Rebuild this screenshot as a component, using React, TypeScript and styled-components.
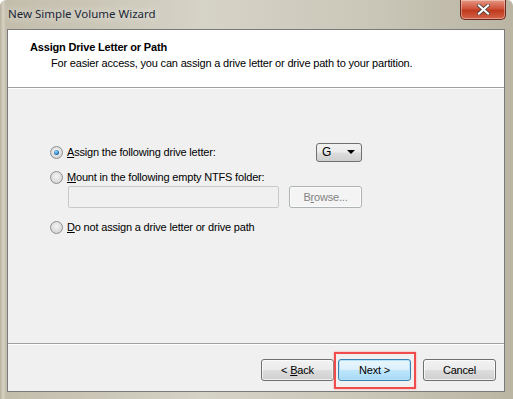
import styled, { createGlobalStyle } from 'styled-components';

const GlobalStyle = createGlobalStyle`
  html, body {
    margin: 0;
    padding: 0;
    background: #ffffff;
  }
  body {
    font-family: 'Liberation Sans', Arial, sans-serif;
    font-size: 11px;
    letter-spacing: -0.18px;
    color: #000;
  }
`;

const Window = styled.div`
  width: 513px;
  height: 399px;
  box-sizing: border-box;
  display: flex;
  flex-direction: column;
  padding: 0 8px 7px 7px;
  background: linear-gradient(90deg, #b5af9b 0px, #d6d2c3 3px, #c2bdab 6px, #d6d3c7 40%, #cbc8ba 70%, #bab5a3 100%);
  border-radius: 6px 6px 0 0;
  overflow: hidden;
`;

const TitleBar = styled.div`
  height: 29px;
  display: flex;
  align-items: flex-start;
  justify-content: space-between;
  flex-shrink: 0;
`;

const TitleText = styled.span`
  font-family: 'Noto Sans', 'Open Sans', sans-serif;
  font-size: 11.5px;
  letter-spacing: 0;
  color: #1b2636;
  margin-top: 6px;
  margin-left: 1px;
  text-shadow: 0 0 8px rgba(255, 255, 255, 0.9);
`;

const CloseButton = styled.div`
  width: 44px;
  height: 19px;
  margin-right: -1px;
  border: 1px solid #6b2a20;
  border-top: none;
  border-radius: 0 0 5px 5px;
  background: linear-gradient(180deg, #e49884 0%, #d0533a 45%, #bf3a1e 55%, #d46448 100%);
  display: flex;
  align-items: center;
  justify-content: center;
  box-shadow: inset 0 0 0 1px rgba(255, 255, 255, 0.35);
`;

const Client = styled.div`
  flex: 1;
  display: flex;
  flex-direction: column;
  border: 1px solid #7a7a7a;
  background: #f0f0f0;
`;

const Header = styled.div`
  height: 58px;
  background: #ffffff;
  padding: 11px 0 0 22px;
  box-sizing: border-box;
  border-bottom: 1px solid #a0a0a0;
`;

const HeaderTitle = styled.div`
  font-weight: 700;
  font-size: 11px;
  line-height: 13px;
`;

const HeaderSub = styled.div`
  font-size: 11px;
  line-height: 13px;
  margin-top: 3px;
  padding-left: 21px;
`;

const Body = styled.div`
  flex: 1;
  border-top: 1px solid #ffffff;
  padding: 55px 0 0 42px;
  display: flex;
  flex-direction: column;
  border-bottom: 1px solid #a0a0a0;
`;

const OptionRow = styled.label<{ $gap?: number }>`
  display: flex;
  align-items: center;
  gap: 4px;
  height: 16px;
  margin-top: ${(p) => p.$gap ?? 0}px;
`;

const Radio = styled.span<{ $checked?: boolean }>`
  width: 11px;
  height: 11px;
  border-radius: 50%;
  border: 1px solid #8e8f8f;
  background: radial-gradient(circle at 50% 40%, #f4f4f4 0%, #dcdcdc 60%, #cbcbcb 100%);
  display: flex;
  align-items: center;
  justify-content: center;
  flex-shrink: 0;
  &::after {
    content: '';
    display: ${(p) => (p.$checked ? 'block' : 'none')};
    width: 5px;
    height: 5px;
    border-radius: 50%;
    background: radial-gradient(circle at 40% 35%, #9fdcff 0%, #2a7fc4 55%, #0d4f8a 100%);
  }
`;

const LabelText = styled.span`
  flex-shrink: 0;
`;

const Key = styled.span`
  text-decoration: underline;
`;

const Select = styled.div`
  margin-left: auto;
  margin-right: 142px;
  width: 46px;
  height: 19px;
  box-sizing: border-box;
  border: 1px solid #707070;
  border-radius: 3px;
  background: linear-gradient(180deg, #f2f2f2 0%, #ebebeb 49%, #dddddd 51%, #cfcfcf 100%);
  display: flex;
  align-items: center;
  justify-content: space-between;
  padding: 0 6px 0 5px;
  font-size: 12px;
`;

const Arrow = styled.span`
  width: 0;
  height: 0;
  border-left: 4px solid transparent;
  border-right: 4px solid transparent;
  border-top: 4px solid #000;
`;

const FolderRow = styled.div`
  display: flex;
  align-items: center;
  gap: 10px;
  margin-top: 1px;
  padding-left: 18px;
`;

const TextBox = styled.div`
  width: 211px;
  height: 22px;
  box-sizing: border-box;
  border: 1px solid #c9c9c9;
  border-radius: 2px;
  background: #f0f0f0;
`;

const Button = styled.div<{ $disabled?: boolean; $default?: boolean }>`
  width: 73px;
  height: 22px;
  box-sizing: border-box;
  border: 1px solid ${(p) => (p.$disabled ? '#adb2b5' : p.$default ? '#3c7fb1' : '#707070')};
  border-radius: 3px;
  display: flex;
  align-items: center;
  justify-content: center;
  white-space: pre;
  color: ${(p) => (p.$disabled ? '#838383' : '#000')};
  background: ${(p) =>
    p.$disabled
      ? '#f4f4f4'
      : p.$default
        ? 'linear-gradient(180deg, #eaf6fd 0%, #d9f0fc 49%, #bee6fd 51%, #a7d9f5 100%)'
        : 'linear-gradient(180deg, #f2f2f2 0%, #ebebeb 49%, #dddddd 51%, #cfcfcf 100%)'};
  box-shadow: ${(p) => (p.$default ? 'inset 0 0 0 1px #b2e3fb' : 'inset 0 0 0 1px rgba(255,255,255,0.7)')};
`;

const Footer = styled.div`
  flex: 0 0 47px;
  border-top: 1px solid #ffffff;
  display: flex;
  align-items: flex-start;
  padding: 14px 0 0 253px;
  box-sizing: border-box;
`;

const Highlight = styled.div`
  position: relative;
  margin-left: 4px;
  &::before {
    content: '';
    position: absolute;
    left: -4px;
    top: -7px;
    right: -5px;
    bottom: -8px;
    border: 2px solid #f04c4c;
    box-shadow: 0 0 2px #f7a0a0;
  }
`;

const CancelWrap = styled.div`
  margin-left: 12px;
`;

export default function App() {
  return (
    <>
      <GlobalStyle />
      <Window>
        <TitleBar>
          <TitleText>New Simple Volume Wizard</TitleText>
          <CloseButton>
            <svg width="13" height="11" viewBox="0 0 13 11">
              <path d="M2 1.5 L11 9.5 M11 1.5 L2 9.5" stroke="#3a3a3a" strokeWidth="3.6" strokeLinecap="square" />
              <path d="M2 1.5 L11 9.5 M11 1.5 L2 9.5" stroke="#ffffff" strokeWidth="2.2" strokeLinecap="square" />
            </svg>
          </CloseButton>
        </TitleBar>
        <Client>
          <Header>
            <HeaderTitle>Assign Drive Letter or Path</HeaderTitle>
            <HeaderSub>For easier access, you can assign a drive letter or drive path to your partition.</HeaderSub>
          </Header>
          <Body>
            <OptionRow>
              <Radio $checked />
              <LabelText>
                <Key>A</Key>ssign the following drive letter:
              </LabelText>
              <Select>
                <span>G</span>
                <Arrow />
              </Select>
            </OptionRow>
            <OptionRow $gap={9}>
              <Radio />
              <LabelText>
                <Key>M</Key>ount in the following empty NTFS folder:
              </LabelText>
            </OptionRow>
            <FolderRow>
              <TextBox />
              <Button $disabled>
                B<Key>r</Key>owse...
              </Button>
            </FolderRow>
            <OptionRow $gap={11}>
              <Radio />
              <LabelText>
                <Key>D</Key>o not assign a drive letter or drive path
              </LabelText>
            </OptionRow>
          </Body>
          <Footer>
            <Button>
              {'< '}
              <Key>B</Key>ack
            </Button>
            <Highlight>
              <Button $default>Next &gt;</Button>
            </Highlight>
            <CancelWrap>
              <Button>Cancel</Button>
            </CancelWrap>
          </Footer>
        </Client>
      </Window>
    </>
  );
}
